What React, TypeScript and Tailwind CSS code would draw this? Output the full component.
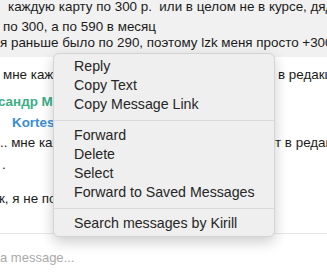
import React from "react";

const items1 = ["Reply", "Copy Text", "Copy Message Link"];
const items2 = ["Forward", "Delete", "Select", "Forward to Saved Messages"];
const items3 = ["Search messages by Kirill"];

function Group({ items }: { items: string[] }) {
  return (
    <div className="flex flex-col">
      {items.map((t) => (
        <div key={t} className="h-[19px] leading-[19px] pl-[20px] text-[14.2px] text-[#262626] whitespace-nowrap">
          {t}
        </div>
      ))}
    </div>
  );
}

function Sep() {
  return (
    <div className="h-[12px] flex items-center">
      <div className="h-px w-full bg-[#dadada]" />
    </div>
  );
}

export default function App() {
  return (
    <div className="relative w-[327px] h-[273px] overflow-hidden bg-white font-['Liberation_Sans',Arial,sans-serif] text-[13.4px] text-[#1b1b1b]">
      <div className="h-[57px] bg-[#f1f1f1] flex flex-col">
        <div className="h-[16px] leading-[16px] mt-[-1px] pl-[8px] whitespace-nowrap">
          каждую карту по 300 р.&nbsp; или в целом не в курсе, дядь
        </div>
        <div className="h-[16px] leading-[16px] mt-[4px] pl-[3px] whitespace-nowrap">по 300, а по 590 в месяц</div>
        <div className="h-[16px] leading-[16px] pl-0 whitespace-nowrap">я раньше было по 290, поэтому lzk меня просто +300</div>
      </div>
      <div className="flex flex-col">
        <div className="h-[16px] leading-[16px] mt-[10px] flex whitespace-nowrap">
          <span className="w-[278px] shrink-0 pl-[3px] overflow-hidden">мне кажется, что это всё</span>
          <span>в редакции</span>
        </div>
        <div className="h-[16px] leading-[16px] mt-[11px] font-bold text-[#3bae86] whitespace-nowrap ml-[-2px]">сандр Миронов</div>
        <div className="h-[16px] leading-[16px] mt-[5px] font-bold text-[#3a8ed3] pl-[12px] whitespace-nowrap">Kortes</div>
        <div className="h-[16px] leading-[16px] mt-[4px] flex whitespace-nowrap">
          <span className="w-[268px] shrink-0 overflow-hidden">.. мне кажется, что это будет</span>
          <span>ет в редакции</span>
        </div>
        <div className="h-[16px] leading-[16px] mt-[6px] pl-[2px]">.</div>
        <div className="h-[16px] leading-[16px] mt-[18px] whitespace-nowrap ml-[-1px]">к, я не понял</div>
        <div className="h-px bg-[#e6e6e6] mt-[26px]" />
        <div className="h-[18px] leading-[18px] mt-[15px] text-[13px] text-[#a9a9a9] whitespace-nowrap">a message...</div>
      </div>

      <div className="absolute left-[53px] top-[53px] w-[222px] rounded-[6px] bg-[#efefef] border border-[#d4d4d4] shadow-[0_5px_14px_rgba(0,0,0,0.2)] py-[3px]">
        <Group items={items1} />
        <Sep />
        <Group items={items2} />
        <Sep />
        <Group items={items3} />
      </div>
    </div>
  );
}
